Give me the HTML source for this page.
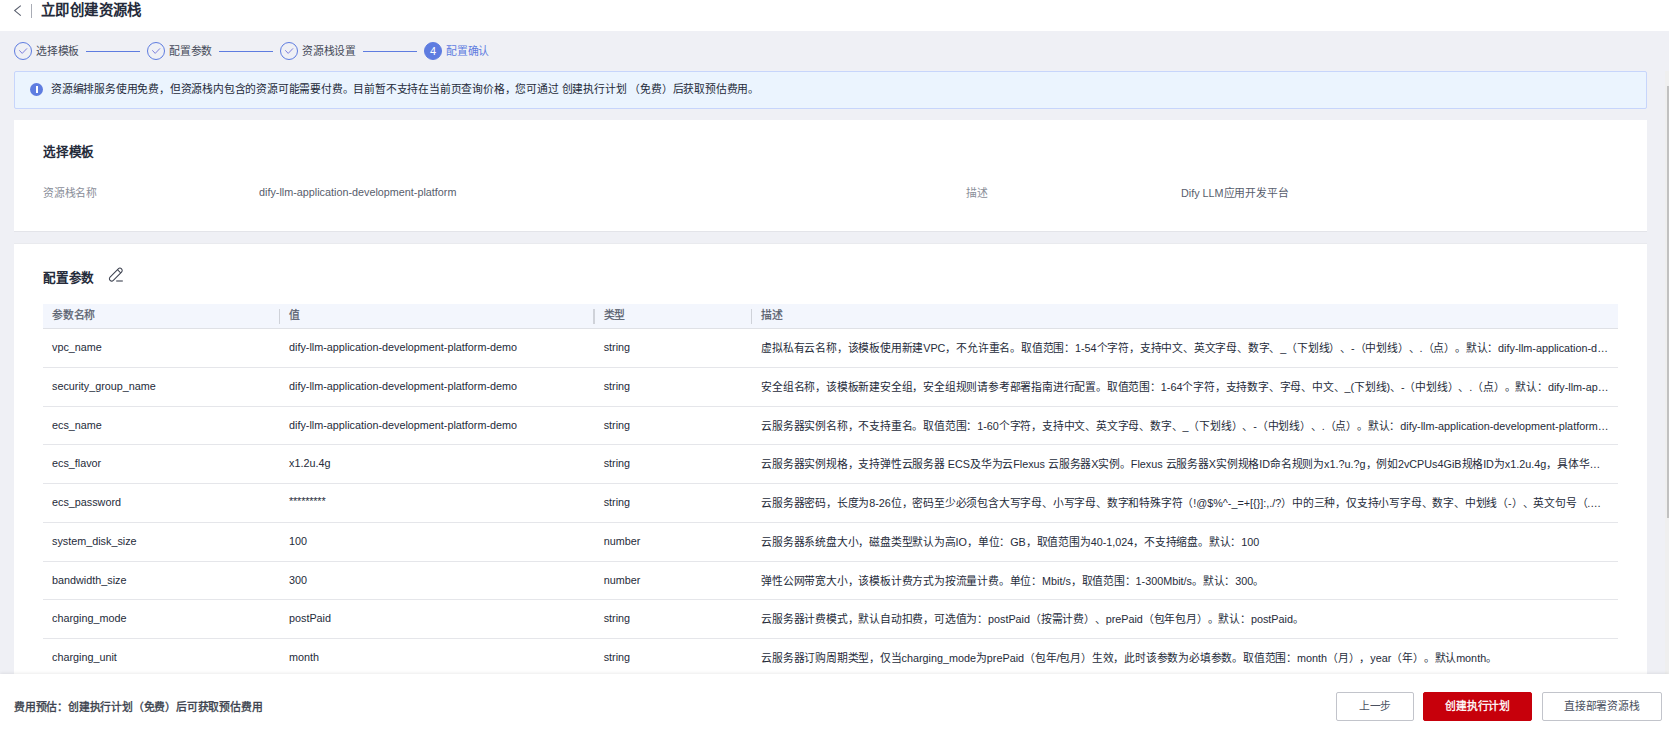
<!DOCTYPE html>
<html lang="zh-CN"><head><meta charset="utf-8">
<style>
*{box-sizing:border-box;margin:0;padding:0}
html,body{text-spacing-trim:space-all;width:1669px;height:732px;overflow:hidden;background:#eff0f5;font-family:"Liberation Sans",sans-serif;color:#252b3a;font-size:10.8px}
.abs{position:absolute}
#hdr{position:absolute;left:0;top:0;width:1669px;height:31px;background:#fff}
#hdr .back{position:absolute;left:15px;top:8px;width:7px;height:7px;border-left:1.2px solid #575d6c;border-bottom:1.2px solid #575d6c;transform:rotate(45deg);}
#hdr .div{position:absolute;left:31px;top:3.5px;width:1px;height:14px;background:#a9acb5}
#hdr .title{position:absolute;left:41px;top:0px;font-size:14.4px;font-weight:bold;line-height:20px;color:#252b3a}
.step{position:absolute;top:42px;height:18px;line-height:18px;font-size:10.8px;color:#454a58;white-space:nowrap}
.circ{position:absolute;top:42px;width:18px;height:18px;border:1px solid #5e7ce0;border-radius:50%}
.circ svg{position:absolute;left:4px;top:5px}
.circ.on{background:#5e7ce0;color:#fff;font-size:11px;text-align:center;line-height:16px}
.sline{position:absolute;top:51px;height:1px;background:#5e7ce0}
#alert{position:absolute;left:14px;top:71px;width:1633px;height:38px;background:#ebf4fe;border:1px solid #c7d5fb;border-radius:2px}
#alert .ic{position:absolute;left:15.3px;top:11.3px;width:13px;height:13px;border-radius:50%;background:#5e7ce0}
#alert .ic:after{content:"";position:absolute;left:5.75px;top:3px;width:1.5px;height:7px;background:#fff}
#alert .tx{position:absolute;left:36px;top:-0.6px;line-height:36px;color:#252b3a;white-space:nowrap}
.card{position:absolute;left:14px;width:1633px;background:#fff}
#c1{border-bottom:1px solid #e3e4e9}
#c2{border-top:1px solid #e9eaee}
.h3{position:absolute;left:29px;font-weight:bold;font-size:12.6px;color:#252b3a;white-space:nowrap}
.lbl{position:absolute;color:#8a8e99;white-space:nowrap}
.val{position:absolute;color:#575d6c;white-space:nowrap}
table{position:absolute;left:29px;top:60px;width:1575px;border-collapse:separate;border-spacing:0;table-layout:fixed}
th{height:25px;padding-bottom:4px !important;-webkit-text-stroke:0.25px #575d6c;background:#f3f6fd;text-align:left;font-weight:normal;color:#575d6c;padding:0 9px;position:relative;border-bottom:1px solid #dfe1e6}
th .sep{position:absolute;left:-1.3px;top:5px;width:1.2px;height:14.5px;background:#cfd2d9}
td{height:38.76px;border-bottom:1px solid #e5e6ea;padding:0 9px 1.5px;color:#252b3a;white-space:nowrap;overflow:hidden;text-overflow:ellipsis}
#foot{position:absolute;left:0;top:674px;width:1669px;height:58px;background:#fff;box-shadow:0 -1px 3px rgba(0,0,0,0.08)}
#foot .tx{position:absolute;left:14px;top:24px;font-weight:normal;-webkit-text-stroke:0.35px #3a3f4c;color:#3a3f4c;white-space:nowrap}
.btn{position:absolute;top:17.5px;height:29px;line-height:27px;border:1px solid #c2c4cb;border-radius:2px;text-align:center;background:#fff;color:#4a5060;white-space:nowrap}
.btn.red{background:#c7000b;border-color:#c7000b;color:#fff;font-weight:normal;-webkit-text-stroke:0.3px #fff}
#sb{position:absolute;left:1665px;top:71px;width:4px;height:603px;background:#efefef}
#sb .th{position:absolute;left:1.5px;top:15px;width:2.5px;height:432px;background:#c1c1c1}
i.c{font-style:normal;letter-spacing:-0.2px}
#hdr .title i.c{letter-spacing:0.4px}
</style></head><body>
<div id="hdr">
  <svg class="abs" style="left:0;top:0" width="30" height="30"><path d="M20.8 5.6 L14.7 10.6 L20.8 15.6" fill="none" stroke="#575d6c" stroke-width="1.1"/></svg><div class="div"></div>
  <div class="title"><i class="c">立即创建资源栈</i></div>
</div>

<div class="circ" style="left:14px"><svg width="9" height="7" viewBox="0 0 9 7"><path d="M0.3 2.3 L3.2 5.4 L8 0.4" fill="none" stroke="#6f70da" stroke-width="0.9"/></svg></div>
<div class="step" style="left:36px"><i class="c">选择模板</i></div>
<div class="sline" style="left:86px;width:54px"></div>
<div class="circ" style="left:147px"><svg width="9" height="7" viewBox="0 0 9 7"><path d="M0.3 2.3 L3.2 5.4 L8 0.4" fill="none" stroke="#6f70da" stroke-width="0.9"/></svg></div>
<div class="step" style="left:169px"><i class="c">配置参数</i></div>
<div class="sline" style="left:219px;width:54px"></div>
<div class="circ" style="left:280px"><svg width="9" height="7" viewBox="0 0 9 7"><path d="M0.3 2.3 L3.2 5.4 L8 0.4" fill="none" stroke="#6f70da" stroke-width="0.9"/></svg></div>
<div class="step" style="left:302px"><i class="c">资源栈设置</i></div>
<div class="sline" style="left:363px;width:54px"></div>
<div class="circ on" style="left:424px">4</div>
<div class="step" style="left:446px;color:#5e7ce0"><i class="c">配置确认</i></div>

<div id="alert"><div class="ic"></div><div class="tx"><i class="c">资源编排服务使用免费，但资源栈内包含的资源可能需要付费。目前暂不支持在当前页查询价格，您可通过</i> <i class="c">创建执行计划</i> <i class="c">（免费）后获取预估费用。</i></div></div>

<div class="card" id="c1" style="top:120px;height:112px">
  <div class="h3" style="top:21px"><i class="c">选择模板</i></div>
  <div class="lbl" style="left:29px;top:64.3px"><i class="c">资源栈名称</i></div>
  <div class="val" style="left:245px;top:66.3px">dify-llm-application-development-platform</div>
  <div class="lbl" style="left:952px;top:64.3px"><i class="c">描述</i></div>
  <div class="val" style="left:1167px;top:64.3px">Dify LLM<i class="c">应用开发平台</i></div>
</div>

<div class="card" id="c2" style="top:243px;height:440px">
  <div class="h3" style="top:23px"><i class="c">配置参数</i></div>
  <svg class="abs" style="left:86px;top:16px" width="32" height="30" viewBox="0 0 32 30"><g transform="translate(15.8 14.6) rotate(-45)"><rect x="-8.1" y="-2.3" width="16.2" height="4.6" rx="2.3" fill="none" stroke="#3d4250" stroke-width="1.05"/><line x1="4.6" y1="-2.3" x2="4.6" y2="2.3" stroke="#3d4250" stroke-width="1"/></g><path d="M16.2 21 H22.8" stroke="#3d4250" stroke-width="1.1"/></svg>
  <table>
    <colgroup><col style="width:237px"><col style="width:314.7px"><col style="width:157.5px"><col></colgroup>
    <tr><th><i class="c">参数名称</i></th><th><span class="sep"></span><i class="c">值</i></th><th><span class="sep"></span><i class="c">类型</i></th><th><span class="sep"></span><i class="c">描述</i></th></tr>
    <tr><td>vpc_name</td><td>dify-llm-application-development-platform-demo</td><td>string</td><td><i class="c">虚拟私有云名称，该模板使用新建</i>VPC<i class="c">，不允许重名。取值范围：</i>1-54<i class="c">个字符，支持中文、英文字母、数字、</i>_<i class="c">（下划线）、</i>-<i class="c">（中划线）、</i>.<i class="c">（点）。默认：</i>dify-llm-application-development-platform-demo</td></tr>
    <tr><td>security_group_name</td><td>dify-llm-application-development-platform-demo</td><td>string</td><td><i class="c">安全组名称，该模板新建安全组，安全组规则请参考部署指南进行配置。取值范围：</i>1-64<i class="c">个字符，支持数字、字母、中文、</i>_(<i class="c">下划线</i>)<i class="c">、</i>-<i class="c">（中划线）、</i>.<i class="c">（点）。默认：</i>dify-llm-application-development-platform-demo</td></tr>
    <tr><td>ecs_name</td><td>dify-llm-application-development-platform-demo</td><td>string</td><td><i class="c">云服务器实例名称，不支持重名。取值范围：</i>1-60<i class="c">个字符，支持中文、英文字母、数字、</i>_<i class="c">（下划线）、</i>-<i class="c">（中划线）、</i>.<i class="c">（点）。默认：</i>dify-llm-application-development-platform-demo</td></tr>
    <tr><td>ecs_flavor</td><td>x1.2u.4g</td><td>string</td><td><i class="c">云服务器实例规格，支持弹性云服务器</i> ECS<i class="c">及华为云</i>Flexus <i class="c">云服务器</i>X<i class="c">实例。</i>Flexus <i class="c">云服务器</i>X<i class="c">实例规格</i>ID<i class="c">命名规则为</i>x1.?u.?g<i class="c">，例如</i>2vCPUs4GiB<i class="c">规格</i>ID<i class="c">为</i>x1.2u.4g<i class="c">，具体华为云规格请参考</i></td></tr>
    <tr><td>ecs_password</td><td><span style="position:relative;top:-1px;letter-spacing:-0.15px">*********</span></td><td>string</td><td><i class="c">云服务器密码，长度为</i>8-26<i class="c">位，密码至少必须包含大写字母、小写字母、数字和特殊字符（</i>!@$%^-_=+[{}]:,./?<i class="c">）中的三种，仅支持小写字母、数字、中划线（</i>-<i class="c">）、英文句号（</i>.<i class="c">）和下划线（</i>_<i class="c">），不能以特殊字符开头。</i></td></tr>
    <tr><td>system_disk_size</td><td>100</td><td>number</td><td><i class="c">云服务器系统盘大小，磁盘类型默认为高</i>IO<i class="c">，单位：</i>GB<i class="c">，取值范围为</i>40-1,024<i class="c">，不支持缩盘。默认：</i>100</td></tr>
    <tr><td>bandwidth_size</td><td>300</td><td>number</td><td><i class="c">弹性公网带宽大小，该模板计费方式为按流量计费。单位：</i>Mbit/s<i class="c">，取值范围：</i>1-300Mbit/s<i class="c">。默认：</i>300<i class="c">。</i></td></tr>
    <tr><td>charging_mode</td><td>postPaid</td><td>string</td><td><i class="c">云服务器计费模式，默认自动扣费，可选值为：</i>postPaid<i class="c">（按需计费）、</i>prePaid<i class="c">（包年包月）。默认：</i>postPaid<i class="c">。</i></td></tr>
    <tr><td>charging_unit</td><td>month</td><td>string</td><td><i class="c">云服务器订购周期类型，仅当</i>charging_mode<i class="c">为</i>prePaid<i class="c">（包年</i>/<i class="c">包月）生效，此时该参数为必填参数。取值范围：</i>month<i class="c">（月），</i>year<i class="c">（年）。默认</i>month<i class="c">。</i></td></tr>
  </table>
</div>

<div id="sb"><div class="th"></div></div>

<div id="foot">
  <div class="tx"><i class="c">费用预估：创建执行计划（免费）后可获取预估费用</i></div>
  <div class="btn" style="left:1336.3px;width:77.3px"><i class="c">上一步</i></div>
  <div class="btn red" style="left:1422.8px;width:109.7px"><i class="c">创建执行计划</i></div>
  <div class="btn" style="left:1541.7px;width:120.3px"><i class="c">直接部署资源栈</i></div>
</div>
</body></html>
